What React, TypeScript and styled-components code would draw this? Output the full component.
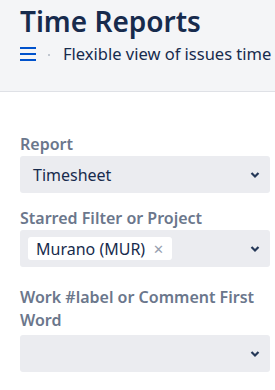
import React from "react";
import styled, { createGlobalStyle } from "styled-components";

const GlobalStyle = createGlobalStyle`
  html, body {
    margin: 0;
    padding: 0;
    background: #ffffff;
    font-family: "Noto Sans", "Liberation Sans", sans-serif;
    color: #172b4d;
    overflow: hidden;
  }
`;

const Page = styled.div`
  width: 275px;
  height: 390px;
  overflow: hidden;
`;

const Header = styled.header`
  background: #f4f5f7;
  border-bottom: 1px solid #dfe1e6;
  height: 92px;
  padding: 3px 0 0 20px;
  box-sizing: border-box;
`;

const Title = styled.h1`
  margin: 0;
  font-size: 28px;
  font-weight: 600;
  line-height: 36px;
  color: #172b4d;
  white-space: nowrap;
`;

const SubRow = styled.div`
  display: flex;
  align-items: center;
  white-space: nowrap;
  height: 28px;
`;

const Burger = styled.span`
  display: flex;
  flex-direction: column;
  flex-shrink: 0;
  gap: 4px;
  width: 16px;
  margin-top: 2px;
  span {
    height: 2px;
    background: #0052cc;
  }
`;

const Dot = styled.span`
  flex-shrink: 0;
  width: 2px;
  height: 2px;
  background: #c1c7d0;
  margin: 4px 13px 0 12px;
`;

const Subtitle = styled.span`
  font-size: 16.5px;
  color: #172b4d;
`;

const Form = styled.div`
  padding: 41px 5px 0 20px;
  display: flex;
  flex-direction: column;
`;

const Field = styled.div<{ $gap?: number }>`
  display: flex;
  flex-direction: column;
  margin-bottom: ${(p) => p.$gap ?? 14}px;
`;

const Label = styled.label<{ $after?: number }>`
  font-size: 16px;
  font-weight: 600;
  line-height: 23px;
  color: #6b778c;
  margin-bottom: ${(p) => p.$after ?? 0}px;
`;

const SelectBox = styled.div`
  height: 37px;
  background: #ebecf0;
  border-radius: 3px;
  display: flex;
  align-items: center;
  padding: 0 10px 0 8px;
  box-sizing: border-box;
`;

const Value = styled.span`
  flex: 1;
  font-size: 16px;
  padding-left: 5px;
  color: #172b4d;
`;

const Spacer = styled.span`
  flex: 1;
`;

const Chip = styled.span`
  display: inline-flex;
  align-items: center;
  background: #ffffff;
  border-radius: 3px;
  height: 23px;
  padding: 0 8px 0 8px;
  font-size: 16px;
  color: #172b4d;
  margin-right: auto;
`;

const ChipX = styled.span`
  color: #97a0af;
  font-size: 13px;
  margin-left: 8px;
`;

const Chevron = () => (
  <svg width="10" height="8" viewBox="0 0 10 8">
    <path d="M1.5 2l3.5 3.5L8.5 2" fill="none" stroke="#253858" strokeWidth="2.2" />
  </svg>
);

export default function App() {
  return (
    <Page>
      <GlobalStyle />
      <Header>
        <Title>Time Reports</Title>
        <SubRow>
          <Burger>
            <span />
            <span />
            <span />
          </Burger>
          <Dot />
          <Subtitle>Flexible view of issues time tracking</Subtitle>
        </SubRow>
      </Header>
      <Form>
        <Field>
          <Label>Report</Label>
          <SelectBox>
            <Value>Timesheet</Value>
            <Chevron />
          </SelectBox>
        </Field>
        <Field $gap={19}>
          <Label>Starred Filter or Project</Label>
          <SelectBox>
            <Chip>
              Murano (MUR)<ChipX>✕</ChipX>
            </Chip>
            <Chevron />
          </SelectBox>
        </Field>
        <Field>
          <Label $after={3}>Work #label or Comment First Word</Label>
          <SelectBox>
            <Spacer />
            <Chevron />
          </SelectBox>
        </Field>
      </Form>
    </Page>
  );
}
